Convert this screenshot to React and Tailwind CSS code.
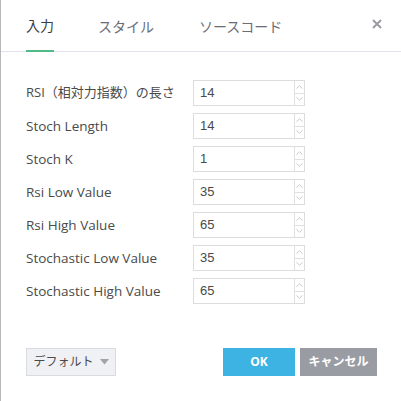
import React from "react";

const rows = [
  ["RSI（相対力指数）の長さ", "14"],
  ["Stoch Length", "14"],
  ["Stoch K", "1"],
  ["Rsi Low Value", "35"],
  ["Rsi High Value", "65"],
  ["Stochastic Low Value", "35"],
  ["Stochastic High Value", "65"],
];

function Spinner() {
  return (
    <div className="w-[10px] border-l border-[#e0e0e0] flex flex-col">
      <div className="flex-1 flex items-center justify-center border-b border-[#e0e0e0]">
        <svg width="7" height="4" viewBox="0 0 7 4"><path d="M0.5 3.5 L3.5 0.8 L6.5 3.5" fill="none" stroke="#c4c4c4" strokeWidth="0.9" /></svg>
      </div>
      <div className="flex-1 flex items-center justify-center">
        <svg width="7" height="4" viewBox="0 0 7 4"><path d="M0.5 0.5 L3.5 3.2 L6.5 0.5" fill="none" stroke="#c4c4c4" strokeWidth="0.9" /></svg>
      </div>
    </div>
  );
}

export default function App() {
  return (
    <div
      className="w-[401px] h-[401px] bg-white border-l border-[#b8b8b8] flex flex-col"
      style={{ fontFamily: '"Open Sans", "Noto Sans CJK JP", sans-serif' }}
    >
      <div className="h-[52px] border-b border-[#e0e3eb] flex items-stretch pl-[25px] pr-[19px]">
        <div className="-mb-px h-[52px] border-b-2 border-[#53b987] flex items-center text-[14px] text-[#3a3e45]">入力</div>
        <div className="-mb-px h-[52px] ml-[44px] flex items-center text-[14px] text-[#6a6d75]">スタイル</div>
        <div className="-mb-px h-[52px] ml-[45px] flex items-center text-[14px] text-[#6a6d75]">ソースコード</div>
        <div className="ml-auto flex items-center pb-[3px]">
          <svg width="10" height="10" viewBox="0 0 10 10"><path d="M1 1 L9 9 M9 1 L1 9" stroke="#9a9ca3" strokeWidth="2" /></svg>
        </div>
      </div>

      <div className="flex flex-col gap-[7px] mt-[28px] pl-[25px]">
        {rows.map(([label, val], i) => (
          <div key={i} className="flex items-center h-[26px]">
            <div className={"w-[167px] text-[#4a4a4a] whitespace-nowrap " + (i === 0 ? "text-[13px]" : "text-[13.5px]")}>{label}</div>
            <div className="w-[112px] h-[26px] border border-[#dcdcdc] flex">
              <div className="flex-1 pl-[6px] flex items-center text-[13px] text-[#4a4a4a]" style={{ fontFamily: '"Liberation Sans", sans-serif' }}>{val}</div>
              <Spinner />
            </div>
          </div>
        ))}
      </div>

      <div className="flex items-center mt-[44px] pl-[25px] pr-[24px]">
        <div className="w-[90px] h-[28px] bg-[#f0f1f5] border border-[#d9dbe0] flex items-center justify-center gap-[6px] text-[12px] text-[#4a4a4a]">
          <span>デフォルト</span>
          <svg width="9" height="6" viewBox="0 0 9 6"><path d="M0 0 L9 0 L4.5 5.5 Z" fill="#a0a3aa" /></svg>
        </div>
        <div className="ml-auto w-[72px] h-[28px] bg-[#3db3e4] text-white text-[12px] font-bold flex items-center justify-center">OK</div>
        <div className="ml-[5px] w-[77px] h-[28px] bg-[#9a9ca3] text-white text-[12px] font-bold flex items-center justify-center">キャンセル</div>
      </div>
    </div>
  );
}
